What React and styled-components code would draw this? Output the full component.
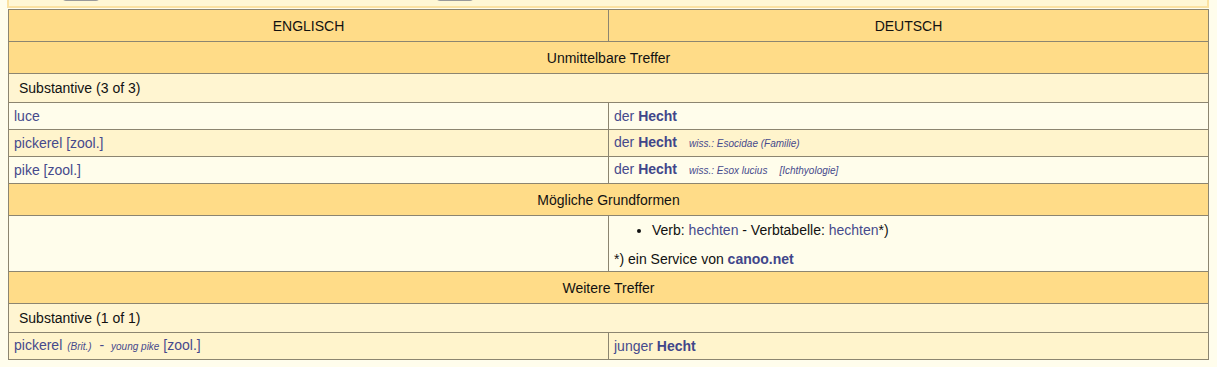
import styled, { createGlobalStyle } from 'styled-components'

const GlobalStyle = createGlobalStyle`
  body {
    margin: 0;
    background-color: #fffdec;
    font-family: "Liberation Sans", Arial, sans-serif;
    font-size: 14px;
    line-height: 16px;
    color: #111;
  }
`

const Page = styled.div`
  padding: 0 8px 0 7px;
  width: 1202px;
`

const Toolbar = styled.div`
  height: 6px;
  background-color: #fff7d4;
  border-left: 2px solid #fbe2a2;
  border-right: 2px solid #fbe2a2;
  border-bottom: 2px solid #fbe2a2;
  display: flex;
  align-items: flex-end;
`

const ToolButton = styled.div`
  width: 38px;
  height: 20px;
  margin-left: ${p => p.$offset}px;
  margin-bottom: 5px;
  border: 1px solid #9a9a9a;
  border-radius: 5px;
  background: #ffffff;
  flex-shrink: 0;
`

const Table = styled.table`
  margin-top: 1px;
  margin-left: 1px;
  width: 1201px;
  border-collapse: collapse;
  border: 1px solid #2e2a20;
  table-layout: fixed;
`

const Th = styled.th`
  height: 31px;
  padding: 0;
  font-weight: normal;
  font-size: 14px;
  background-color: #ffdc88;
  border: 1px solid #8c8570;
  text-align: center;
`

const SectionCell = styled.td`
  height: 31px;
  padding: 0;
  background-color: #ffdc88;
  border: 1px solid #8c8570;
  text-align: center;
`

const GroupCell = styled.td`
  height: 28px;
  padding: 0 0 0 10px;
  background-color: #fff5d1;
  border: 1px solid #8c8570;
`

const Cell = styled.td`
  height: ${p => p.$h || 26}px;
  padding: 0 5px;
  background-color: ${p => (p.$alt ? '#fff4cc' : '#fffdeb')};
  border: 1px solid #8c8570;
  vertical-align: ${p => (p.$top ? 'top' : 'middle')};
`

const Link = styled.span`
  color: #464a8c;
`

const Strong = styled.b`
  color: #41468a;
  font-weight: bold;
`

const Note = styled.span`
  font-size: 10px;
  font-style: italic;
  color: #464a8c;
  margin-left: ${p => p.$gap || 12}px;
`

const FormList = styled.ul`
  margin: 6px 0 0;
  padding-left: 38px;
`

const Service = styled.p`
  margin: 13px 0 0;
`

const Rule = styled.div`
  margin: 7px 0 0 1px;
  width: 1201px;
  height: 1px;
  background-color: #b3b0a6;
`

const Row = ({ alt, left, right }) => (
  <tr>
    <Cell $alt={alt}>{left}</Cell>
    <Cell $alt={alt}>{right}</Cell>
  </tr>
)

export default function App() {
  return (
    <>
      <GlobalStyle />
      <Page>
        <Toolbar>
          <ToolButton $offset={52} />
          <ToolButton $offset={334} />
        </Toolbar>
        <Table>
          <colgroup>
            <col style={{ width: 600 }} />
            <col />
          </colgroup>
          <thead>
            <tr>
              <Th>ENGLISCH</Th>
              <Th>DEUTSCH</Th>
            </tr>
          </thead>
          <tbody>
            <tr>
              <SectionCell colSpan={2}>Unmittelbare Treffer</SectionCell>
            </tr>
            <tr>
              <GroupCell colSpan={2}>Substantive (3 of 3)</GroupCell>
            </tr>
            <Row
              left={<Link>luce</Link>}
              right={<><Link>der </Link><Strong>Hecht</Strong></>}
            />
            <Row
              alt
              left={<Link>pickerel [zool.]</Link>}
              right={
                <>
                  <Link>der </Link><Strong>Hecht</Strong>
                  <Note>wiss.: Esocidae (Familie)</Note>
                </>
              }
            />
            <Row
              left={<Link>pike [zool.]</Link>}
              right={
                <>
                  <Link>der </Link><Strong>Hecht</Strong>
                  <Note>wiss.: Esox lucius</Note>
                  <Note $gap={12}>[Ichthyologie]</Note>
                </>
              }
            />
            <tr>
              <SectionCell colSpan={2}>Mögliche Grundformen</SectionCell>
            </tr>
            <tr>
              <Cell $h={55} />
              <Cell $h={55} $top>
                <FormList>
                  <li>
                    Verb: <Link>hechten</Link> - Verbtabelle: <Link>hechten</Link>*)
                  </li>
                </FormList>
                <Service>
                  *) ein Service von <Strong>canoo.net</Strong>
                </Service>
              </Cell>
            </tr>
            <tr>
              <SectionCell colSpan={2}>Weitere Treffer</SectionCell>
            </tr>
            <tr>
              <GroupCell colSpan={2}>Substantive (1 of 1)</GroupCell>
            </tr>
            <Row
              alt
              left={
                <>
                  <Link>pickerel</Link>
                  <Note $gap={5}>(Brit.)</Note>
                  <Link> &nbsp;- </Link>
                  <Note $gap={3}>young pike</Note>
                  <Link> [zool.]</Link>
                </>
              }
              right={<><Link>junger </Link><Strong>Hecht</Strong></>}
            />
          </tbody>
        </Table>
        <Rule />
      </Page>
    </>
  )
}
